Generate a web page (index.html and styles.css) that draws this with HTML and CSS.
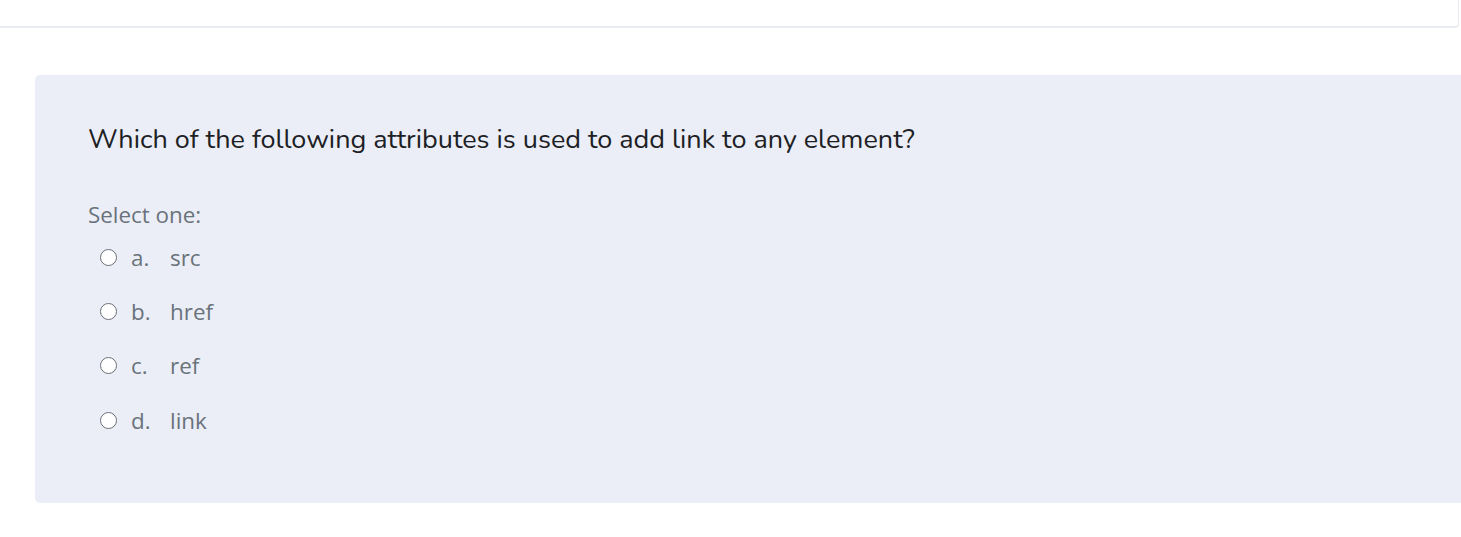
FILE: index.html
```html
<!DOCTYPE html>
<html>
<head>
<meta charset="utf-8">
<link rel="stylesheet" href="styles.css">
</head>
<body>
<div class="topcard"></div>
<div class="panel">
  <div class="qtext">Which of the following attributes is used to add link to any element?</div>
  <div class="prompt">Select one:</div>
  <div class="answers">
    <label class="opt"><span class="radio"></span><span class="letter">a.</span><span class="val">src</span></label>
    <label class="opt"><span class="radio"></span><span class="letter">b.</span><span class="val">href</span></label>
    <label class="opt"><span class="radio"></span><span class="letter">c.</span><span class="val">ref</span></label>
    <label class="opt"><span class="radio"></span><span class="letter">d.</span><span class="val">link</span></label>
  </div>
</div>
</body>
</html>
```
FILE: styles.css
```css
html, body { margin: 0; padding: 0; background: #fff; }
body { width: 1461px; height: 537px; overflow: hidden; font-family: "Open Sans", sans-serif; }
.topcard {
  height: 26px;
  margin-right: 2px;
  border-bottom: 2px solid #e9ecf3;
  border-right: 1px solid #e9ecf3;
  border-bottom-right-radius: 4px;
}
.panel {
  margin: 47px 0 0 35px;
  height: 428px;
  background: #ebeef6;
  border-radius: 5px 0 0 5px;
  padding: 0 0 0 53px;
  box-sizing: border-box;
  display: flex;
  flex-direction: column;
}
.qtext {
  font-family: "Nunito", "Lato", sans-serif;
  font-size: 27px;
  color: #1d2125;
  margin-top: 48px;
  line-height: 34px;
}
.prompt {
  margin-top: 43px;
  font-size: 22.4px;
  color: #6a737b;
  line-height: 30px;
}
.answers { display: flex; flex-direction: column; margin-top: 0; }
.opt {
  display: flex;
  align-items: center;
  height: 54.4px;
  padding-left: 12px;
  font-size: 22.4px;
  color: #6a737b;
}
.radio {
  width: 15px; height: 15px;
  border: 1.7px solid #6b6f75;
  border-radius: 50%;
  background: #fff;
  flex: none;
}
.letter { margin-left: 14px; width: 39px; }
```
